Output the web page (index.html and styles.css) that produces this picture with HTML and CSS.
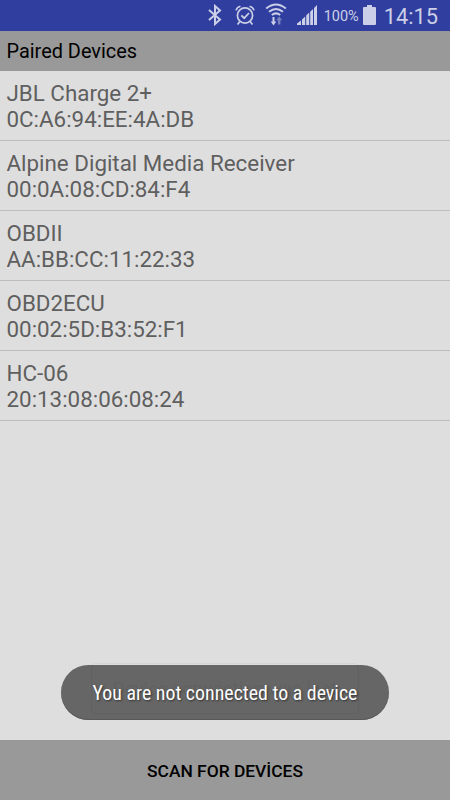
FILE: index.html
```html
<!DOCTYPE html>
<html lang="en">
  <head>
    <meta charset="UTF-8" />
    <title>Paired Devices</title>
    <link rel="stylesheet" href="styles.css">
  </head>
  <body>
    <div class="status-bar">
      <svg class="icon-bluetooth" width="16" height="22" viewBox="0 0 16 22">
        <path d="M2 6 L13 15.5 L8 20 V2 L13 6.5 L2 16" />
      </svg>
      <svg class="icon-alarm" width="20" height="22" viewBox="0 0 20 22">
        <circle cx="10" cy="11.5" r="7.6" />
        <path d="M6.3 11.3 L9.2 14.2 L14 9" />
        <path d="M1 6.4 Q1.8 3.2 5.4 2.2 M19 6.4 Q18.2 3.2 14.6 2.2 M4.8 17.5 L2.6 20.4 M15.2 17.5 L17.4 20.4" />
      </svg>
      <svg class="icon-wifi" width="22" height="24" viewBox="0 0 22 24">
        <path d="M1.2 6.5 Q11 -1.5 20.8 6.5 M4 9.8 Q11 4.3 18 9.8 M6.8 13 Q11 9.8 15.2 13" />
        <path class="down" d="M7.5 15 H9.5 V19.5 H11.3 L8.5 23.5 L5.7 19.5 H7.5 Z" />
        <path class="up" d="M13 22.5 H15.4 V18.3 H17.2 L14.2 14.5 L11.2 18.3 H13 Z" />
      </svg>
      <svg class="icon-signal" width="20" height="20" viewBox="0 0 20 20">
        <path d="M0 20 V18.5 L4 15.5 V20 Z M5 20 V14.4 L8.2 11.4 V20 Z M9.2 20 V10.6 L12.2 7.6 V20 Z M13.2 20 V6.8 L16 4 V20 Z M17 20 V3 L20 0 V20 Z" />
      </svg>
      <span class="battery-level">100%</span>
      <svg class="icon-battery" width="13" height="20" viewBox="0 0 13 20">
        <path d="M4 0 H9 V2 H12 Q13 2 13 3 V19 Q13 20 12 20 H1 Q0 20 0 19 V3 Q0 2 1 2 H4 Z" />
      </svg>
      <span class="clock">14:15</span>
    </div>

    <h1 class="title">Paired Devices</h1>

    <ul class="devices">
      <li>JBL Charge 2+<br>0C:A6:94:EE:4A:DB</li>
      <li>Alpine Digital Media Receiver<br>00:0A:08:CD:84:F4</li>
      <li>OBDII<br>AA:BB:CC:11:22:33</li>
      <li>OBD2ECU<br>00:02:5D:B3:52:F1</li>
      <li>HC-06<br>20:13:08:06:08:24</li>
    </ul>

    <button class="scan" type="button">SCAN FOR DEVİCES</button>

    <div class="toast"><span>You are not connected to a device</span></div>
    <!-- previous toast, almost faded out -->
    <div class="toast-fading">Device connection was lost</div>
  </body>
</html>
```
FILE: styles.css
```css
* {
  box-sizing: border-box;
}

body {
  margin: 0;
  height: 800px;
  display: flex;
  flex-direction: column;
  position: relative;
  overflow: hidden;
  background-color: #dedede;
  font-family: Roboto, sans-serif;
}

.status-bar {
  height: 31px;
  flex: none;
  display: flex;
  align-items: flex-start;
  justify-content: flex-end;
  padding: 0 12px 0 0;
  background-color: #303f9f;
  color: #cbcfe7;
}

.status-bar svg {
  flex: none;
  fill: none;
  stroke: #cbcfe7;
}

.icon-bluetooth {
  margin: 4px 12px 0 0;
  stroke-width: 2;
}

.icon-alarm {
  margin: 4px 10px 0 0;
  stroke-width: 1.7;
}

.status-bar .icon-wifi {
  margin: 2px 10px 0 0;
  stroke-width: 2;
}

.icon-wifi .down {
  fill: #cbcfe7;
  stroke: none;
}

.icon-wifi .up {
  fill: #7882bf;
  stroke: none;
}

.status-bar .icon-signal,
.status-bar .icon-battery {
  margin-top: 5px;
  fill: #cbcfe7;
  stroke: none;
}

.battery-level {
  margin: 7px 4px 0 7px;
  font-size: 14.5px;
  line-height: 19px;
}

.clock {
  margin: 3px 0 0 8px;
  font-size: 21.8px;
  line-height: 27px;
}

.title {
  height: 40px;
  flex: none;
  margin: 0;
  padding: 0 6.5px;
  background-color: #999;
  color: #000;
  font-size: 19.9px;
  font-weight: 400;
  line-height: 42px;
}

.devices {
  flex: 1;
  margin: 0;
  padding: 0;
  list-style: none;
}

.devices li {
  height: 70px;
  padding: 9px 6.5px 0;
  border-bottom: 1px solid #bdbdbd;
  color: #5f5f5f;
  font-size: 22.36px;
  line-height: 26px;
}

.scan {
  height: 60px;
  flex: none;
  padding: 1px 0 0;
  border: none;
  background-color: #999;
  color: #000;
  font-family: inherit;
  font-size: 17.4px;
  font-weight: 500;
}

.toast {
  position: absolute;
  left: 61px;
  top: 665px;
  width: 328px;
  height: 55px;
  display: flex;
  align-items: center;
  justify-content: center;
  padding-top: 2px;
  border-radius: 28px;
  background-color: #666;
  box-shadow: inset 0 -1px 0 #585858;
  color: #fff;
  font-size: 19.9px;
  white-space: nowrap;
  text-shadow: 1px 1px 2px #333;
}

.toast span {
  font-stretch: condensed;
}

.toast-fading {
  position: absolute;
  left: 91px;
  top: 663px;
  width: 268px;
  height: 51px;
  border: 1px solid #000;
  border-radius: 4px;
  color: #000;
  font-size: 18.5px;
  line-height: 50px;
  text-align: center;
  opacity: 0.04;
}
```
